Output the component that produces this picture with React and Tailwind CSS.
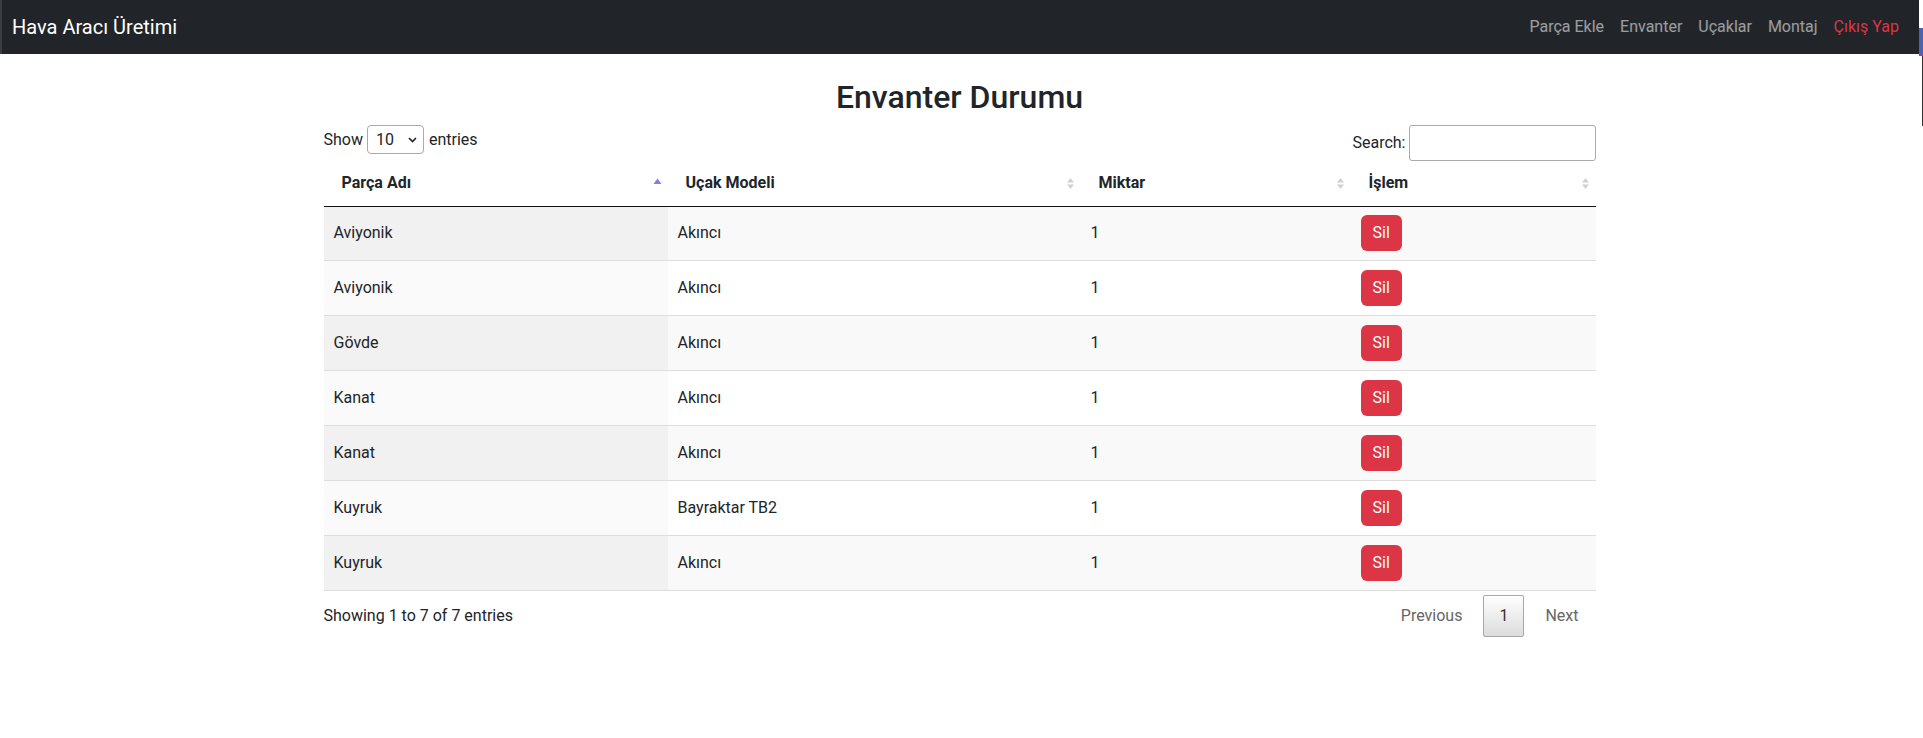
import { useState } from "react";

const rows = [
  { part: "Aviyonik", model: "Akıncı", qty: 1 },
  { part: "Aviyonik", model: "Akıncı", qty: 1 },
  { part: "Gövde", model: "Akıncı", qty: 1 },
  { part: "Kanat", model: "Akıncı", qty: 1 },
  { part: "Kanat", model: "Akıncı", qty: 1 },
  { part: "Kuyruk", model: "Bayraktar TB2", qty: 1 },
  { part: "Kuyruk", model: "Akıncı", qty: 1 },
];

const navLinks = ["Parça Ekle", "Envanter", "Uçaklar", "Montaj"];

function SortIcon({ active }) {
  if (active) {
    return (
      <svg width="9" height="12" viewBox="0 0 9 12" className="shrink-0">
        <path d="M0.5 7 L4.5 1.5 L8.5 7 Z" fill="#7c80e3" />
      </svg>
    );
  }
  return (
    <svg width="9" height="13" viewBox="0 0 9 13" className="shrink-0">
      <path d="M1 5.5 L4.5 1 L8 5.5 Z" fill="#d0d0d0" />
      <path d="M1 7.5 L4.5 12 L8 7.5 Z" fill="#d0d0d0" />
    </svg>
  );
}

function HeaderCell({ label, width, active }) {
  return (
    <th
      className={`${width} h-[45px] border-b border-[#111] pl-[18px] pr-[6px] text-left font-bold align-middle`}
    >
      <div className="flex items-center justify-between">
        <span>{label}</span>
        <SortIcon active={active} />
      </div>
    </th>
  );
}

export default function App() {
  const [pageSize, setPageSize] = useState("10");

  return (
    <div
      className="flex min-h-[738px] bg-white text-[#212529] text-[16px]"
      style={{ fontFamily: "Roboto, 'Liberation Sans', sans-serif" }}
    >
      <div className="w-[1919px] shrink-0">
        <nav className="h-[54px] bg-[#212529] flex items-center justify-between pl-[10px] pr-[12px] border-l-2 border-[#3a3d41]">
          <span className="text-white text-[20px] leading-[30px]">Hava Aracı Üretimi</span>
          <ul className="flex items-center">
            {navLinks.map((l) => (
              <li key={l}>
                <a className="px-[8px] text-white/55 leading-[24px]">{l}</a>
              </li>
            ))}
            <li>
              <a className="px-[8px] text-[#dc3545] leading-[24px]">Çıkış Yap</a>
            </li>
          </ul>
        </nav>

        <div className="w-[1272px] mx-auto pt-[24px]">
          <h2 className="text-center text-[32px] leading-[38px] font-medium mb-[9px]">
            Envanter Durumu
          </h2>

          <div className="flex items-start justify-between h-[36px]">
            <label className="flex items-center gap-[4px] h-[29px]">
              Show
              <div className="relative">
                <select
                  value={pageSize}
                  onChange={(e) => setPageSize(e.target.value)}
                  className="appearance-none w-[57px] h-[29px] border border-[#aaa] rounded-[4px] pl-[8px] bg-white text-[16px]"
                >
                  <option>10</option>
                  <option>25</option>
                  <option>50</option>
                  <option>100</option>
                </select>
                <svg
                  width="9"
                  height="6"
                  viewBox="0 0 9 6"
                  className="absolute right-[7px] top-[12px] pointer-events-none"
                >
                  <path d="M1 1 L4.5 4.5 L8 1" fill="none" stroke="#222" strokeWidth="1.6" />
                </svg>
              </div>
              <span className="ml-[1px]">entries</span>
            </label>
            <label className="flex items-center gap-[3px] h-[36px]">
              Search:
              <input className="w-[187px] h-[36px] border border-[#aaa] rounded-[3px] px-[6px]" />
            </label>
          </div>

          <table className="w-full border-collapse">
            <thead>
              <tr>
                <HeaderCell label="Parça Adı" width="w-[344px]" active />
                <HeaderCell label="Uçak Modeli" width="w-[413px]" />
                <HeaderCell label="Miktar" width="w-[270px]" />
                <HeaderCell label="İşlem" width="w-[245px]" />
              </tr>
            </thead>
            <tbody>
              {rows.map((r, i) => {
                const odd = i % 2 === 0;
                const last = i === rows.length - 1;
                return (
                  <tr
                    key={i}
                    className={`${i > 0 ? "border-t border-[#ddd]" : ""} ${
                      last ? "border-b border-[#111]" : ""
                    } ${odd ? "bg-[#f9f9f9]" : "bg-white"}`}
                  >
                    <td
                      className={`${i === 0 ? "h-[54px]" : "h-[55px]"} px-[10px] ${
                        odd ? "bg-[#f1f1f1]" : "bg-[#fafafa]"
                      }`}
                    >
                      {r.part}
                    </td>
                    <td className="px-[10px]">{r.model}</td>
                    <td className="px-[10px]">{r.qty}</td>
                    <td className="px-[10px]">
                      <button className="bg-[#dc3545] text-white rounded-[6px] px-[12px] py-[6px] leading-[24px]">
                        Sil
                      </button>
                    </td>
                  </tr>
                );
              })}
            </tbody>
          </table>

          <div className="flex items-center justify-between h-[42px] mt-[4px]">
            <span>Showing 1 to 7 of 7 entries</span>
            <div className="flex items-center gap-[4px] text-[#666]">
              <span className="px-[16px] py-[8px] leading-[24px] border border-transparent">Previous</span>
              <span className="px-[15px] py-[8px] leading-[24px] border border-[#a8a8a8] rounded-[2px] text-[#333] bg-gradient-to-b from-white to-[#dcdcdc]">
                1
              </span>
              <span className="px-[16px] py-[8px] leading-[24px] border border-transparent">Next</span>
            </div>
          </div>
        </div>
      </div>

      <div className="w-[4px] flex flex-col">
        <div className="h-[28px] bg-white" />
        <div className="h-[25px] bg-[#4d62b3]" />
        <div className="h-[3px] bg-[#7a4fa8]" />
        <div className="h-[70px] border-r border-[#333]" />
      </div>
    </div>
  );
}
